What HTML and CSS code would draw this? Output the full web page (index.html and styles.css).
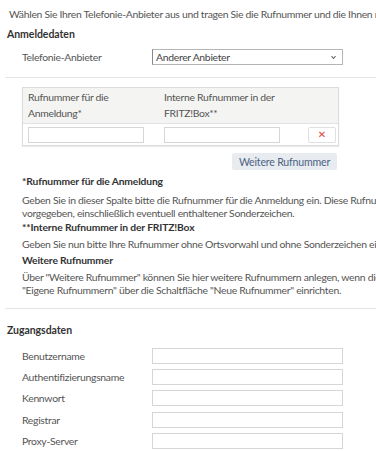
FILE: index.html
```html
<!DOCTYPE html>
<html lang="de">
<head>
    <meta charset="UTF-8">
    <meta name="viewport" content="width=device-width, initial-scale=1.0">
    <title>Telefonie-Anbieter</title>
    <link rel="stylesheet" href="styles.css">
</head>
<body>

<div class="page">
    <p class="intro">Wählen Sie Ihren Telefonie-Anbieter aus und tragen Sie die Rufnummer und die Ihnen mitgeteilten Zugangsdaten ein.</p>

    <h3 class="section-title">Anmeldedaten</h3>

    <div class="form-row">
        <label class="form-label">Telefonie-Anbieter</label>
        <div class="select-box">
            <span>Anderer Anbieter</span>
            <svg class="select-arrow" width="7" height="5" viewBox="0 0 7 5">
                <path d="M1.5 1.2 L3.5 3.5 L5.5 1.2" fill="none" stroke="#666" stroke-width="1.1"/>
            </svg>
        </div>
    </div>

    <hr class="divider">

    <div class="numbers-table">
        <div class="numbers-head">
            <div>Rufnummer für die<br>Anmeldung*</div>
            <div>Interne Rufnummer in der<br>FRITZ!Box**</div>
            <div></div>
        </div>
        <div class="numbers-row">
            <input type="text" class="text-input">
            <input type="text" class="text-input">
            <button class="delete-button">&#10005;</button>
        </div>
    </div>

    <div class="button-row">
        <button class="add-button">Weitere Rufnummer</button>
    </div>

    <!-- Hinweise zu den Spalten -->
    <div class="notes">
        <h4 class="note-title">*Rufnummer für die Anmeldung</h4>
        <p class="note-text note-first">Geben Sie in dieser Spalte bitte die Rufnummer für die Anmeldung ein. Diese Rufnummer wird Ihnen vom Anbieter<br>vorgegeben, einschließlich eventuell enthaltener Sonderzeichen.</p>
        <h4 class="note-title note-close">**Interne Rufnummer in der FRITZ!Box</h4>
        <p class="note-text">Geben Sie nun bitte Ihre Rufnummer ohne Ortsvorwahl und ohne Sonderzeichen ein.</p>
        <h4 class="note-title">Weitere Rufnummer</h4>
        <p class="note-text">Über "Weitere Rufnummer" können Sie hier weitere Rufnummern anlegen, wenn diese zum selben Konto gehören. Sonst unter<br>"Eigene Rufnummern" über die Schaltfläche "Neue Rufnummer" einrichten.</p>
    </div>

    <hr class="divider divider-lower">

    <h3 class="section-title section-access">Zugangsdaten</h3>

    <div class="access-list">
        <div class="form-row">
            <label class="form-label">Benutzername</label>
            <input type="text" class="text-input wide">
        </div>
        <div class="form-row">
            <label class="form-label">Authentifizierungsname</label>
            <input type="text" class="text-input wide">
        </div>
        <div class="form-row">
            <label class="form-label">Kennwort</label>
            <input type="password" class="text-input wide">
        </div>
        <div class="form-row">
            <label class="form-label">Registrar</label>
            <input type="text" class="text-input wide">
        </div>
        <div class="form-row">
            <label class="form-label">Proxy-Server</label>
            <input type="text" class="text-input wide">
        </div>
    </div>
</div>

</body>
</html>
```

FILE: styles.css
```css
body {
    margin: 0;
    font-family: 'Lato', 'Liberation Sans', sans-serif;
    font-size: 10.4px;
    letter-spacing: -0.3px;
    color: #555;
    background-color: #fff;
    overflow: hidden;
}

.page {
    width: 376px;
    overflow: hidden;
}

.intro {
    margin: 6px 0 0 9px;
    line-height: 16px;
    white-space: nowrap;
}

.section-title {
    margin: 4px 0 0 7px;
    font-size: 10.5px;
    letter-spacing: -0.05px;
    line-height: 16px;
    font-weight: bold;
    color: #333;
}

.form-row {
    display: flex;
    align-items: center;
    margin-top: 7px;
    height: 16px;
}

.form-label {
    width: 130px;
    padding-left: 22px;
    line-height: 16px;
    color: #555;
}

.select-box {
    width: 191px;
    height: 16px;
    box-sizing: border-box;
    border: 1px solid #b5b5b5;
    border-left-color: #888;
    display: flex;
    align-items: center;
    justify-content: space-between;
    padding: 0 5px 0 3px;
    color: #444;
}

.divider {
    margin: 12px 0 0 5px;
    border: none;
    border-top: 1px solid #e4e4e4;
    height: 0;
}

.numbers-table {
    margin: 9px 0 0 22px;
    width: 317px;
    box-sizing: border-box;
    border: 1px solid #dcdcdc;
    box-shadow: 0 1px 1px rgba(0, 0, 0, 0.08);
}

.numbers-head,
.numbers-row {
    display: grid;
    grid-template-columns: 136px 144px 28px;
    padding-left: 5px;
}

.numbers-head {
    background-color: #f4f4f2;
    line-height: 16px;
    padding-top: 1px;
    padding-bottom: 2px;
    border-bottom: 1px solid #e2e2e2;
    color: #555;
}

.numbers-row {
    padding-top: 3px;
    padding-bottom: 2px;
}

.text-input {
    width: 116px;
    height: 16px;
    box-sizing: border-box;
    border: 1px solid #d6d6d6;
    margin: 0;
    padding: 0;
    background: #fff;
}

.text-input.wide {
    width: 191px;
}

.delete-button {
    width: 28px;
    height: 16px;
    margin: 0;
    padding: 0;
    border: 1px solid #e0e0e0;
    border-radius: 2px;
    background: #fff;
    color: #e0453a;
    font-size: 10px;
    line-height: 14px;
    font-family: 'DejaVu Sans', sans-serif;
}

.button-row {
    width: 337px;
    display: flex;
    justify-content: flex-end;
    margin-top: 7px;
}

.add-button {
    width: 105px;
    height: 17px;
    margin: 0;
    padding: 0;
    border: none;
    border-radius: 2px;
    background-color: #e8ecf0;
    color: #4c6283;
    font-family: inherit;
    font-size: 10.6px;
    letter-spacing: -0.2px;
}

.notes {
    margin: 5px 0 0 22px;
    white-space: nowrap;
}

.note-title {
    margin: 3px 0 0 0;
    font-size: 10.3px;
    letter-spacing: -0.15px;
    line-height: 13px;
    font-weight: bold;
    color: #333;
}

.notes .note-title:first-child {
    margin-top: 0;
}

.note-text {
    margin: 4px 0 0 0;
    line-height: 13px;
    color: #555;
}

.note-text.note-first {
    margin-top: 6px;
}

.note-title.note-close {
    margin-top: 1px;
}

.divider-lower {
    margin-top: 11px;
}

.section-access {
    margin-top: 13px;
}

.access-list .form-row {
    margin-top: 0;
    height: 21.3px;
}

.access-list {
    margin-top: 7px;
}
```
